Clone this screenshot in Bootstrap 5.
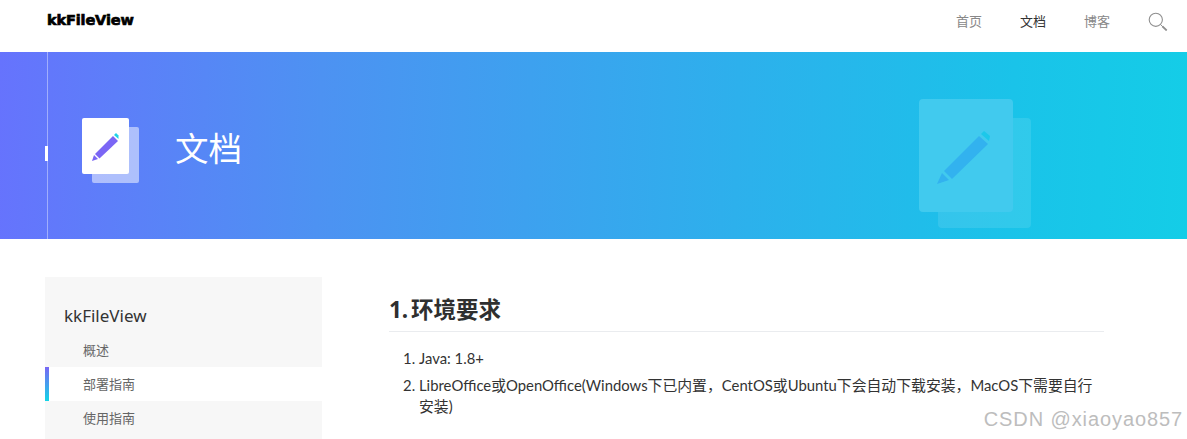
<!DOCTYPE html>
<html lang="zh-CN">
<head>
  <meta charset="UTF-8" />
  <meta name="viewport" content="width=device-width, initial-scale=1.0" />
  <title>kkFileView 文档</title>
  <link href="https://cdn.jsdelivr.net/npm/bootstrap@5.3.2/dist/css/bootstrap.min.css" rel="stylesheet" />
  <style>
    html, body {
      height: 439px;
      overflow: hidden;
    }

    body {
      font-family: "Noto Sans", "Noto Sans CJK SC", sans-serif;
      color: #333;
      position: relative;
    }

    .top-bar {
      height: 52px;
      padding: 0 19px 0 47px;
    }

    .logo-text {
      font-family: "DejaVu Sans", sans-serif;
      font-weight: 700;
      font-size: 14.5px;
      color: #000;
      -webkit-text-stroke: 0.7px #000;
      letter-spacing: -0.15px;
      line-height: 1;
      margin-top: -11px;
    }

    .top-links {
      gap: 38px;
      margin-right: 38px;
      margin-top: -9px;
    }

    .top-links a {
      font-size: 13px;
      color: #888;
      text-decoration: none;
    }

    .top-links a.current {
      color: #333;
    }

    .search-icon {
      margin-top: -8px;
    }

    .hero {
      height: 187px;
      padding-left: 82px;
      position: relative;
      background: linear-gradient(92deg, #6673fd 0%, #4d92f2 27%, #2db0ec 62%, #1ac3e9 85%, #14cde7 100%);
    }

    .hero-line {
      position: absolute;
      left: 47px;
      top: 0;
      bottom: 0;
      width: 1px;
      background: rgba(255, 255, 255, 0.4);
    }

    .hero-tick {
      position: absolute;
      left: 45px;
      top: 94px;
      width: 3px;
      height: 15px;
      background: #fff;
    }

    .hero-title {
      font-family: "Noto Sans CJK SC", sans-serif;
      font-size: 33.5px;
      color: #fff;
      margin: 2px 0 0 36px;
      line-height: 1;
      font-weight: 400;
    }

    .doc-icon {
      position: relative;
      width: 57px;
      height: 65px;
      flex-shrink: 0;
      margin-top: 10px;
    }

    .doc-back {
      position: absolute;
      left: 10px;
      top: 9px;
      width: 47px;
      height: 56px;
      border-radius: 2px;
      background: rgba(255, 255, 255, 0.5);
    }

    .doc-front {
      position: absolute;
      left: 0;
      top: 0;
      width: 47px;
      height: 56px;
      border-radius: 2px;
      background: #fff;
    }

    .big-doc {
      position: absolute;
      left: 919px;
      top: 47px;
      width: 112px;
      height: 130px;
    }

    .big-back {
      position: absolute;
      left: 19px;
      top: 19px;
      width: 93px;
      height: 110px;
      border-radius: 4px;
      background: rgba(255, 255, 255, 0.1);
    }

    .big-front {
      position: absolute;
      left: 0;
      top: 0;
      width: 94px;
      height: 113px;
      border-radius: 4px;
      background: #41caee;
    }

    .page-body {
      padding: 38px 83px 0 45px;
      gap: 67px;
    }

    .side-menu {
      width: 277px;
      height: 162px;
      flex-shrink: 0;
      background: #f7f7f7;
      padding-top: 25px;
    }

    .side-title {
      font-size: 17px;
      line-height: 28px;
      padding-left: 19px;
      margin-bottom: 3px;
      color: #333;
    }

    .side-item {
      display: block;
      height: 34px;
      line-height: 34px;
      padding-left: 38px;
      font-size: 13px;
      color: #666;
      text-decoration: none;
    }

    .side-item.current {
      background: #fff;
      border-left: 4px solid;
      border-image: linear-gradient(180deg, #7b63f5, #0fd8e6) 1;
      padding-left: 34px;
    }

    .doc-main {
      flex: 1 1 auto;
      min-width: 0;
    }

    .doc-main h2 {
      font-size: 22.5px;
      font-weight: 700;
      word-spacing: -3px;
      line-height: 30px;
      margin: 18px 0 16px;
      padding-bottom: 6px;
      border-bottom: 1px solid #eaecef;
      color: #2f2f2f;
    }

    .doc-main ol {
      font-family: "Lato", "Noto Sans CJK SC", sans-serif;
      font-size: 14.85px;
      line-height: 21px;
      margin: 0;
      padding-left: 30px;
      color: #333;
    }

    .doc-main li {
      margin-bottom: 6px;
    }

    .watermark {
      position: absolute;
      right: 4px;
      bottom: 8px;
      font-family: "Liberation Sans", sans-serif;
      font-size: 20px;
      line-height: 24px;
      letter-spacing: 0.9px;
      color: #bdbdbd;
    }
  </style>
</head>
<body>
  <nav class="top-bar d-flex align-items-center justify-content-between bg-white">
    <div class="logo-text">kkFileView</div>
    <div class="d-flex align-items-center">
      <div class="top-links d-flex align-items-center">
        <a href="#">首页</a>
        <a href="#" class="current">文档</a>
        <a href="#">博客</a>
      </div>
      <svg class="search-icon" width="20" height="20" viewBox="0 0 20 20" fill="none" stroke="#8f8f8f">
        <circle cx="7.8" cy="7.8" r="6.6" stroke-width="1.1" />
        <path d="M12.6 12.6 L18.6 18.4" stroke-width="1" />
        <path d="M14.4 14.4 L18.6 18.4" stroke-width="2" />
      </svg>
    </div>
  </nav>

  <header class="hero d-flex align-items-center">
    <div class="hero-line"></div>
    <div class="hero-tick"></div>
    <div class="doc-icon">
      <div class="doc-back"></div>
      <div class="doc-front">
        <svg width="47" height="56" viewBox="0 0 47 56">
          <path d="M10 43 L12 37 L16 41 Z" fill="#7b66f5" />
          <path d="M13 36 L31 18 L36 23 L17.500 40.500 Z" fill="#7b66f5" />
          <path d="M32 17 L34 15 L36.500 17.500 L36.500 21 Z" fill="#1fd3e8" />
        </svg>
      </div>
    </div>
    <h1 class="hero-title">文档</h1>
    <div class="big-doc">
      <div class="big-back"></div>
      <div class="big-front">
        <svg width="94" height="113" viewBox="0 0 94 113">
          <path d="M18 85 L23 74 L30 81 Z" fill="#32b2ef" />
          <path d="M25 72 L60 37 L69 45 L33 80 Z" fill="#32b2ef" />
          <path d="M62 35 L65 32 L71 37 L70 42 Z" fill="#1cc8ea" />
        </svg>
      </div>
    </div>
  </header>

  <div class="page-body d-flex align-items-start">
    <aside class="side-menu">
      <div class="side-title">kkFileView</div>
      <a href="#" class="side-item">概述</a>
      <a href="#" class="side-item current">部署指南</a>
      <a href="#" class="side-item">使用指南</a>
    </aside>
    <main class="doc-main">
      <h2>1. 环境要求</h2>
      <ol>
        <li>Java: 1.8+</li>
        <li>LibreOffice或OpenOffice(Windows下已内置，CentOS或Ubuntu下会自动下载安装，MacOS下需要自行安装)</li>
      </ol>
    </main>
  </div>

  <div class="watermark">CSDN @xiaoyao857</div>
</body>
</html>
